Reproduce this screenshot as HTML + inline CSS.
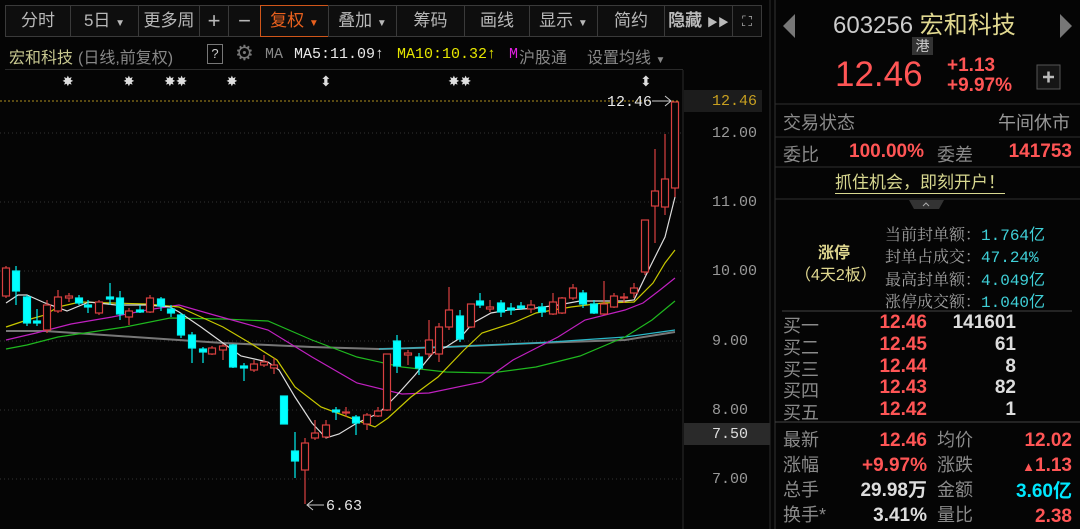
<!DOCTYPE html>
<html><head><meta charset="utf-8"><style>
*{margin:0;padding:0;box-sizing:border-box}
body{width:1080px;height:529px;background:#050505;overflow:hidden;position:relative;font-family:"Liberation Sans","Noto Sans CJK SC",sans-serif;color:#aaa}
.a{position:absolute;white-space:nowrap}
.tb{position:absolute;top:5px;height:32px;border:1px solid #3a3a3a;background:#0e0e0e;color:#b8b8b8;font-size:17px;line-height:30px;text-align:center}
.ax{position:absolute;left:712px;font-family:"Liberation Mono","Noto Sans CJK SC",monospace;font-size:15px;color:#999}
.r{color:#ff5555}
.lab{position:absolute;left:783px;font-size:18px;color:#8a8a8a}
.num{position:absolute;font-size:19px;font-weight:bold;text-align:right}
.ch{position:absolute;left:885px;font-size:16px;color:#a0a0a0;font-family:"Liberation Serif","Noto Serif CJK SC",serif}
.ch b{font-weight:normal;color:#3fd0d8;font-family:"Liberation Mono","Noto Sans CJK SC",monospace}
</style></head><body>
<!-- toolbar -->
<div class="tb" style="left:5px;width:66px">分时</div>
<div class="tb" style="left:70px;width:69px">5日 <span style="font-size:10px">▼</span></div>
<div class="tb" style="left:138px;width:62px">更多周</div>
<div class="tb" style="left:199px;width:30px;font-size:22px">+</div>
<div class="tb" style="left:228px;width:33px;font-size:22px">−</div>
<div class="tb" style="left:260px;width:69px;border-color:#d0561a;color:#e8601e">复权 <span style="font-size:10px">▼</span></div>
<div class="tb" style="left:328px;width:69px">叠加 <span style="font-size:10px">▼</span></div>
<div class="tb" style="left:396px;width:69px">筹码</div>
<div class="tb" style="left:464px;width:66px">画线</div>
<div class="tb" style="left:529px;width:69px">显示 <span style="font-size:10px">▼</span></div>
<div class="tb" style="left:597px;width:68px">简约</div>
<div class="tb" style="left:664px;width:69px;font-weight:bold;color:#bbb">隐藏 <span style="font-size:11px">▶▶</span></div>
<div class="tb" style="left:732px;width:30px;font-size:14px">⛶</div>
<!-- title row -->
<div class="a" style="left:9px;top:44px;font-size:16px;color:#c8c890">宏和科技</div>
<div class="a" style="left:78px;top:44px;font-size:16px;color:#888">(日线,前复权)</div>
<div class="a" style="left:207px;top:44px;width:16px;height:20px;border:1px solid #777;color:#ccc;font-size:13px;text-align:center;line-height:18px">?</div>
<div class="a" style="left:235px;top:41px;font-size:21px;color:#777">⚙</div>
<div class="a" style="left:265px;top:46px;font-size:15px;color:#888;font-family:'Liberation Mono',monospace">MA</div>
<div class="a" style="left:294px;top:46px;font-size:15px;color:#e8e8e8;font-family:'Liberation Mono',monospace">MA5:11.09↑</div>
<div class="a" style="left:397px;top:46px;font-size:15px;color:#e6e600;font-family:'Liberation Mono',monospace">MA10:10.32↑</div>
<div class="a" style="left:509px;top:46px;font-size:15px;color:#e020e0;font-family:'Liberation Mono',monospace">M</div>
<div class="a" style="left:519px;top:44px;font-size:16px;color:#888">沪股通</div>
<div class="a" style="left:587px;top:44px;font-size:16px;color:#888">设置均线 <span style="font-size:10px">▼</span></div>
<div class="a" style="left:5px;top:69px;width:678px;height:1px;background:#2a2a2a"></div>
<!-- chart -->
<svg class="a" style="left:0;top:0" width="1080" height="529">
<g fill="#ddd" font-size="14" font-family="Liberation Sans">
<text x="62" y="86">✸</text><text x="123" y="86">✸</text><text x="164" y="86">✸✸</text><text x="226" y="86">✸</text><text x="320" y="86">⬍</text><text x="448" y="86">✸✸</text><text x="640" y="86">⬍</text>
</g>
<line x1="683" y1="70" x2="683" y2="529" stroke="#2a2a2a"/>
<line x1="770" y1="0" x2="770" y2="529" stroke="#2a2a2a"/>
<line x1="775" y1="0" x2="775" y2="529" stroke="#333"/>
<line x1="0" y1="101" x2="680" y2="101" stroke="#b09020" stroke-dasharray="2,2"/>
<g stroke="#333" stroke-dasharray="1,3">
<line x1="0" y1="133" x2="683" y2="133"/><line x1="0" y1="202" x2="683" y2="202"/><line x1="0" y1="271" x2="683" y2="271"/><line x1="0" y1="341" x2="683" y2="341"/><line x1="0" y1="410" x2="683" y2="410"/><line x1="0" y1="479" x2="683" y2="479"/>
</g>
<rect x="684" y="90" width="78" height="22" fill="#1c1c1c"/>
<rect x="684" y="423" width="86" height="22" fill="#2a2a2a"/>
<g fill="none" stroke-width="1.2">
<polyline stroke="#777" stroke-width="2" points="6,331 45,331 134,337 223,343 312,347 379,349 446,347 536,343 625,340 675,332"/>
<polyline stroke="#2ab8c8" points="379,349 446,347 536,343 625,337 675,330"/>
<polyline stroke="#1fb81f" points="6,349 27,345 58,337 125,327 170,318 223,319 268,321 312,340 357,357 402,367 446,372 491,373 536,367 580,356 625,337 652,320 675,301"/>
<polyline stroke="#c020c0" points="6,340 36,333 71,324 112,317 147,310 179,305 214,315 268,330 312,357 357,383 402,394 429,393 482,382 513,360 558,337 585,320 625,310 643,303 660,290 675,278"/>
<polyline stroke="#c8c800" points="6,327 27,320 45,315 58,307 80,302 112,303 147,304 179,307 201,317 223,327 250,343 277,360 295,387 321,407 348,417 375,427 388,418 411,397 438,377 464,350 482,333 513,323 536,313 571,307 603,303 634,302 653,283 665,263 675,250"/>
<polyline stroke="#ddd" points="6,303 18,295 27,295 45,303 67,311 89,302 116,305 147,305 170,307 179,312 201,327 223,343 241,356 268,362 279,370 295,397 312,423 326,438 339,434 357,423 379,413 397,395 415,375 433,353 446,347 460,338 473,323 491,313 509,310 536,308 558,305 580,301 625,301 634,300 650,267 665,237 675,197"/>
</g>
<g id="c"></g>
<g stroke-width="1.2">
<!-- candles: red hollow -->
<g stroke="#d84040" fill="#050505">
<line x1="6" y1="266" x2="6" y2="298"/><rect x="2.5" y="268" width="7" height="28"/>
<line x1="47" y1="300" x2="47" y2="333"/><rect x="43.5" y="305" width="7" height="25"/>
<line x1="58" y1="290" x2="58" y2="313"/><rect x="54.5" y="297" width="7" height="14"/>
<line x1="69" y1="293" x2="69" y2="302"/><rect x="65.5" y="296" width="7" height="2"/>
<line x1="99" y1="300" x2="99" y2="315"/><rect x="95.5" y="302" width="7" height="11"/>
<line x1="129" y1="308" x2="129" y2="325"/><rect x="125.5" y="311" width="7" height="6"/>
<line x1="150" y1="295" x2="150" y2="313"/><rect x="146.5" y="298" width="7" height="14"/>
<line x1="212" y1="346" x2="212" y2="355"/><rect x="208.5" y="348" width="7" height="6"/>
<line x1="223" y1="344" x2="223" y2="360"/><rect x="219.5" y="346" width="7" height="4"/>
<line x1="254" y1="360" x2="254" y2="372"/><rect x="250.5" y="364" width="7" height="6"/>
<line x1="264" y1="355" x2="264" y2="367"/><rect x="260.5" y="362" width="7" height="3"/>
<line x1="274" y1="358" x2="274" y2="374"/><rect x="270.5" y="365" width="7" height="3"/>
<line x1="305" y1="438" x2="305" y2="504"/><rect x="301.5" y="443" width="7" height="27"/>
<line x1="315" y1="420" x2="315" y2="440"/><rect x="311.5" y="433" width="7" height="5"/>
<line x1="326" y1="420" x2="326" y2="438"/><rect x="322.5" y="425" width="7" height="12"/>
<line x1="346" y1="407" x2="346" y2="417"/><rect x="342.5" y="412" width="7" height="1"/>
<line x1="367" y1="413" x2="367" y2="430"/><rect x="363.5" y="415" width="7" height="9"/>
<line x1="378" y1="407" x2="378" y2="417"/><rect x="374.5" y="411" width="7" height="5"/>
<line x1="387" y1="354" x2="387" y2="411"/><rect x="383.5" y="354" width="7" height="56"/>
<line x1="408" y1="350" x2="408" y2="365"/><rect x="404.5" y="353" width="7" height="2"/>
<line x1="429" y1="320" x2="429" y2="357"/><rect x="425.5" y="340" width="7" height="14"/>
<line x1="439" y1="323" x2="439" y2="362"/><rect x="435.5" y="327" width="7" height="27"/>
<line x1="449" y1="287" x2="449" y2="330"/><rect x="445.5" y="310" width="7" height="17"/>
<line x1="471" y1="304" x2="471" y2="328"/><rect x="467.5" y="304" width="7" height="23"/>
<line x1="490" y1="300" x2="490" y2="312"/><rect x="486.5" y="307" width="7" height="2"/>
<line x1="531" y1="300" x2="531" y2="313"/><rect x="527.5" y="305" width="7" height="4"/>
<line x1="553" y1="293" x2="553" y2="315"/><rect x="549.5" y="302" width="7" height="12"/>
<line x1="562" y1="297" x2="562" y2="314"/><rect x="558.5" y="298" width="7" height="15"/>
<line x1="573" y1="284" x2="573" y2="300"/><rect x="569.5" y="288" width="7" height="10"/>
<line x1="604" y1="281" x2="604" y2="315"/><rect x="600.5" y="304" width="7" height="10"/>
<line x1="614" y1="293" x2="614" y2="308"/><rect x="610.5" y="296" width="7" height="11"/>
<line x1="624" y1="293" x2="624" y2="303"/><rect x="620.5" y="297" width="7" height="1"/>
<line x1="634" y1="283" x2="634" y2="298"/><rect x="630.5" y="288" width="7" height="5"/>
<line x1="645" y1="220" x2="645" y2="275"/><rect x="641.5" y="220" width="7" height="52"/>
<line x1="655" y1="149" x2="655" y2="243"/><rect x="651.5" y="191" width="7" height="15"/>
<line x1="665" y1="134" x2="665" y2="215"/><rect x="661.5" y="179" width="7" height="28"/>
<line x1="675" y1="102" x2="675" y2="197"/><rect x="671.5" y="102" width="7" height="86"/>
</g>
<g stroke="#00f0f0" fill="#00ffff">
<line x1="16" y1="266" x2="16" y2="305"/><rect x="12.5" y="271" width="7" height="20"/>
<line x1="27" y1="295" x2="27" y2="326"/><rect x="23.5" y="297" width="7" height="26"/>
<line x1="37" y1="309" x2="37" y2="326"/><rect x="33.5" y="321" width="7" height="2"/>
<line x1="79" y1="295" x2="79" y2="305"/><rect x="75.5" y="298" width="7" height="5"/>
<line x1="88" y1="300" x2="88" y2="313"/><rect x="84.5" y="305" width="7" height="2"/>
<line x1="110" y1="283" x2="110" y2="305"/><rect x="106.5" y="297" width="7" height="2"/>
<line x1="120" y1="291" x2="120" y2="320"/><rect x="116.5" y="298" width="7" height="16"/>
<line x1="140" y1="305" x2="140" y2="313"/><rect x="136.5" y="310" width="7" height="2"/>
<line x1="161" y1="297" x2="161" y2="311"/><rect x="157.5" y="299" width="7" height="7"/>
<line x1="171" y1="305" x2="171" y2="317"/><rect x="167.5" y="309" width="7" height="4"/>
<line x1="181" y1="313" x2="181" y2="338"/><rect x="177.5" y="315" width="7" height="20"/>
<line x1="192" y1="332" x2="192" y2="363"/><rect x="188.5" y="335" width="7" height="13"/>
<line x1="203" y1="347" x2="203" y2="363"/><rect x="199.5" y="349" width="7" height="3"/>
<line x1="233" y1="344" x2="233" y2="368"/><rect x="229.5" y="345" width="7" height="22"/>
<line x1="244" y1="363" x2="244" y2="381"/><rect x="240.5" y="366" width="7" height="2"/>
<rect x="280.5" y="396" width="7" height="28"/>
<line x1="295" y1="432" x2="295" y2="478"/><rect x="291.5" y="451" width="7" height="10"/>
<line x1="336" y1="407" x2="336" y2="420"/><rect x="332.5" y="410" width="7" height="2"/>
<line x1="356" y1="415" x2="356" y2="435"/><rect x="352.5" y="417" width="7" height="6"/>
<line x1="397" y1="335" x2="397" y2="373"/><rect x="393.5" y="341" width="7" height="25"/>
<line x1="419" y1="353" x2="419" y2="375"/><rect x="415.5" y="357" width="7" height="11"/>
<line x1="460" y1="310" x2="460" y2="342"/><rect x="456.5" y="316" width="7" height="23"/>
<line x1="480" y1="293" x2="480" y2="308"/><rect x="476.5" y="301" width="7" height="4"/>
<line x1="501" y1="300" x2="501" y2="317"/><rect x="497.5" y="303" width="7" height="9"/>
<line x1="511" y1="303" x2="511" y2="315"/><rect x="507.5" y="308" width="7" height="2"/>
<line x1="521" y1="302" x2="521" y2="310"/><rect x="517.5" y="306" width="7" height="2"/>
<line x1="542" y1="303" x2="542" y2="317"/><rect x="538.5" y="307" width="7" height="5"/>
<line x1="583" y1="290" x2="583" y2="308"/><rect x="579.5" y="293" width="7" height="11"/>
<line x1="594" y1="300" x2="594" y2="314"/><rect x="590.5" y="304" width="7" height="9"/>
</g>
</g>
<g fill="#e8e8e8" font-family="Liberation Mono,monospace" font-size="15">
<text x="607" y="106">12.46</text>
<text x="326" y="510">6.63</text>
</g>
<path d="M652 101h18M665 96l6 5-6 5" stroke="#ccc" fill="none"/>
<path d="M308 505h16M313 500l-6 5 6 5" stroke="#ccc" fill="none"/>
<!-- right panel arrows -->
<path d="M795 14v24l-12-12z" fill="#777"/>
<path d="M1060 14v24l12-12z" fill="#777"/>
<rect x="1037" y="65" width="23" height="24" fill="#151515" stroke="#555"/>
<path d="M1043 77h11M1048.5 71.5v11" stroke="#bbb" stroke-width="2.5"/>
<g stroke="#2e2e2e"><line x1="775" y1="104" x2="1080" y2="104"/><line x1="775" y1="137" x2="1080" y2="137"/><line x1="775" y1="167" x2="1080" y2="167"/><line x1="775" y1="199" x2="1080" y2="199"/><line x1="782" y1="311" x2="1072" y2="311" stroke="#444"/><line x1="775" y1="422" x2="1080" y2="422" stroke="#444"/></g>
<path d="M909 200h35l-5 9h-25z" fill="#333"/>
<path d="M923 206l3-3 3 3" stroke="#aaa" fill="none"/>
</svg>
<div class="ax" style="top:93px;color:#c8a020">12.46</div>
<div class="ax" style="top:125px">12.00</div>
<div class="ax" style="top:194px">11.00</div>
<div class="ax" style="top:263px">10.00</div>
<div class="ax" style="top:333px">9.00</div>
<div class="ax" style="top:402px">8.00</div>
<div class="ax" style="top:426px;color:#ddd">7.50</div>
<div class="ax" style="top:471px">7.00</div>
<!-- right panel -->
<div class="a" style="left:833px;top:5px;font-size:24px;color:#ccc">603256 <span style="color:#e0d890">宏和科技</span></div>
<div class="a" style="left:912px;top:37px;width:21px;height:18px;background:#333;color:#ccc;font-size:14px;text-align:center;line-height:18px">港</div>
<div class="a r" style="left:835px;top:55px;font-size:35px">12.46</div>
<div class="a r" style="left:947px;top:56px;font-size:19px;font-weight:bold;line-height:20px">+1.13<br>+9.97%</div>
<div class="lab" style="top:109px">交易状态</div>
<div class="a" style="right:10px;top:109px;font-size:18px;color:#999">午间休市</div>
<div class="lab" style="top:141px">委比</div>
<div class="num r" style="left:849px;top:141px">100.00%</div>
<div class="lab" style="left:937px;top:141px">委差</div>
<div class="num r" style="right:8px;top:141px">141753</div>
<div class="a" style="left:835px;top:173px;font-size:17px;color:#d8d890;border-bottom:1px solid #d8d890;line-height:20px">抓住机会，即刻开户！</div>
<div class="a" style="left:818px;top:239px;font-size:16px;font-weight:bold;color:#e0d890">涨停</div>
<div class="a" style="left:795px;top:261px;font-size:16px;color:#e0d890">（4天2板）</div>
<div class="ch" style="top:221px">当前封单额：<b>1.764亿</b></div>
<div class="ch" style="top:244px">封单占成交：<b>47.24%</b></div>
<div class="ch" style="top:266px">最高封单额：<b>4.049亿</b></div>
<div class="ch" style="top:288px">涨停成交额：<b>1.040亿</b></div>
<div class="lab" style="top:312px">买一</div><div class="lab" style="top:334px">买二</div><div class="lab" style="top:356px">买三</div><div class="lab" style="top:377px">买四</div><div class="lab" style="top:399px">买五</div>
<div class="num r" style="right:153px;top:312px;line-height:21.8px">12.46<br>12.45<br>12.44<br>12.43<br>12.42</div>
<div class="num" style="right:64px;top:312px;line-height:21.8px;color:#ddd">141601<br>61<br>8<br>82<br>1</div>
<div class="lab" style="top:428px;line-height:25px">最新<br>涨幅<br>总手<br>换手*</div>
<div class="lab" style="left:937px;top:428px;line-height:25px">均价<br>涨跌<br>金额<br>量比</div>
<div class="num" style="right:153px;top:428px;line-height:25px"><span class="r">12.46</span><br><span class="r">+9.97%</span><br><span style="color:#ddd">29.98万</span><br><span style="color:#ddd">3.41%</span></div>
<div class="num" style="right:8px;top:428px;line-height:25px"><span class="r">12.02</span><br><span class="r"><span style="font-size:13px">▲</span>1.13</span><br><span style="color:#00e8ff">3.60亿</span><br><span class="r">2.38</span></div>
</body></html>
